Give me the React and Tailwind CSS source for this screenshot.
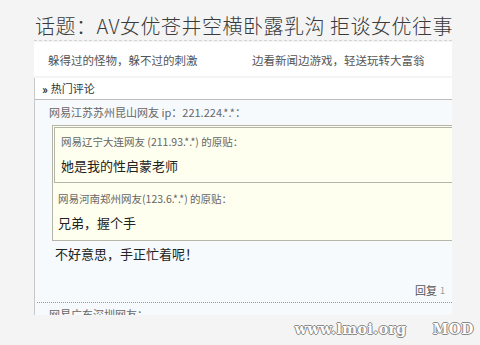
const font = { fontFamily: '"Noto Sans CJK SC", "Noto Sans", sans-serif' };

const QuoteHead = ({ children }) => (
  <div className="text-[10.5px] leading-[14px] text-[#666]">{children}</div>
);

const App = () => {
  return (
    <div
      className="relative w-[480px] h-[345px] overflow-hidden bg-[#f4f4f4] text-[#333]"
      style={font}
    >
      <div className="ml-[34px] w-[418px]">
        {/* TITLE */}
        <div className="pt-[12px] pl-[1px] text-[20px] leading-[27px] font-light tracking-[0.5px] text-[#3a3a3a] whitespace-nowrap">
          话题：AV女优苍井空横卧露乳沟 拒谈女优往事
        </div>
        <div className="mt-[1px] border-b border-dashed border-[#d4d4d4]" />

        {/* LINKS */}
        <div className="mt-[1px] h-[34px] bg-white flex items-center pt-[3px] text-[11.5px] text-[#555]">
          <span className="pl-[14px] w-[218px]">躲得过的怪物，躲不过的刺激</span>
          <span>边看新闻边游戏，轻送玩转大富翁</span>
        </div>

        {/* COMMENTS */}
        <div className="mt-[2px] h-[237px] overflow-hidden border-l border-[#c8c8c8]">
          <div className="h-[22px] bg-white border-b border-[#bdbdbd] flex items-center pl-[7px] text-[11px] text-[#333]">
            <span className="font-bold text-[12px] mr-[5px] tracking-[-2px]">››</span>
            <span>热门评论</span>
          </div>
          <div className="bg-[#f7fafd] pl-[14px] pt-[5px] pb-[6px]">
            <div className="text-[11px] leading-[15px] text-[#666]">
              网易江苏苏州昆山网友 ip：221.224.*.*：
            </div>
            <div className="mt-[5px] ml-[3px] border border-r-0 border-[#b4b4a8] bg-[#fffff0] pt-[1px]">
              <div className="ml-[1px] border border-r-0 border-[#b4b4a8] bg-[#fffff0] pl-[6px] pt-[7px] pb-[7px]">
                <QuoteHead>网易辽宁大连网友 (211.93.*.*) 的原贴：</QuoteHead>
                <div className="mt-[8px] text-[13px] leading-[18px] text-[#222]">
                  她是我的性启蒙老师
                </div>
              </div>
              <div className="pl-[5px] pt-[9px] pb-[8px]">
                <QuoteHead>网易河南郑州网友(123.6.*.*) 的原贴：</QuoteHead>
                <div className="mt-[8px] text-[13px] leading-[18px] text-[#222]">
                  兄弟，握个手
                </div>
              </div>
            </div>
            <div className="mt-[4px] pl-[6px] text-[13px] leading-[18px] text-[#222]">
              不好意思，手正忙着呢！
            </div>
            <div className="mt-[20px] pr-[7px] flex justify-end text-[11px] leading-[15px] text-[#555]">
              回复 <span className="ml-[3px] text-[9px] text-[#999]">1</span>
            </div>
            <div className="mt-[4px] -ml-[12px] border-b border-dotted border-[#999]" />
            <div className="mt-[4px] text-[11px] leading-[15px] text-[#666]">
              网易广东深圳网友：
            </div>
          </div>
        </div>
      </div>

      {/* WATERMARK */}
      <div
        className="absolute right-[6px] bottom-[5px] flex gap-[26px] text-[14px] font-bold tracking-[0.5px] text-white"
        style={{
          fontFamily: '"DejaVu Serif", serif',
          textShadow:
            '1px 0 #888, -1px 0 #888, 0 1px #888, 0 -1px #888',
        }}
      >
        <span>www.lmoi.org</span>
        <span>MOD</span>
      </div>
    </div>
  );
};

export default App;
